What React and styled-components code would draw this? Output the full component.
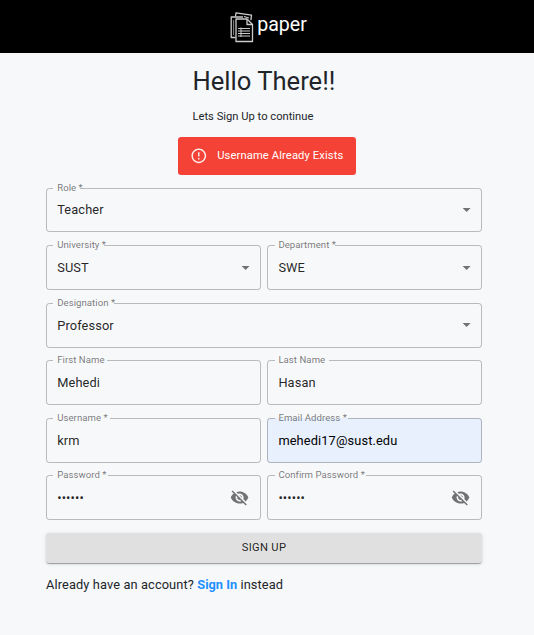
import React from "react";
import styled, { createGlobalStyle } from "styled-components";

const GlobalStyle = createGlobalStyle`
  * { box-sizing: border-box; }
  body {
    margin: 0;
    background: #f7f8fa;
    color: #212529;
    font-family: Roboto, "Liberation Sans", sans-serif;
  }
`;

const Page = styled.div`
  min-height: 635px;
  background: #f7f8fa;
`;

const Header = styled.header`
  height: 53px;
  background: #000;
  color: #fff;
  display: flex;
  justify-content: center;
  padding: 11px 0 0 3px;
  gap: 3px;
`;

const Brand = styled.span`
  font-size: 19.6px;
  line-height: 28px;
`;

const LogoSvg = styled.svg`
  width: 24px;
  height: 32px;
`;

const Main = styled.main`
  width: 436px;
  margin-left: 46px;
  display: flex;
  flex-direction: column;
`;

const Intro = styled.section`
  width: 142px;
  margin-left: 146.5px;
  padding-top: 12px;
  white-space: nowrap;
`;

const Title = styled.h1`
  margin: 0;
  font-size: 25.6px;
  font-weight: 400;
  line-height: 33.6px;
`;

const Subtitle = styled.p`
  margin: 10px 0 0;
  font-size: 11.2px;
  line-height: 16px;
`;

const Alert = styled.div`
  width: 178px;
  height: 38px;
  margin: 12px 0 0 132px;
  padding: 0 12px;
  border-radius: 3.2px;
  background: #f44336;
  color: #fff;
  display: flex;
  align-items: center;
  gap: 9.6px;
  font-size: 11.2px;
  letter-spacing: 0.01071em;
  white-space: nowrap;

  svg { width: 17.6px; height: 17.6px; fill: currentColor; opacity: 0.9; flex: none; }
`;

const Form = styled.form`
  margin-top: 12.94px;
  display: grid;
  grid-template-columns: 1fr 1fr;
  gap: 12.6px 6.4px;
`;

const Control = styled.div`
  position: relative;
  grid-column: ${(p) => (p.$wide ? "1 / -1" : "auto")};
  height: 44.95px;
  padding: 0 11.2px;
  border-radius: 3.2px;
  display: flex;
  align-items: center;
  justify-content: space-between;
  background: ${(p) => (p.$filled ? "#e8f0fe" : "transparent")};
  color: ${(p) => (p.$filled ? "#000" : "rgba(0, 0, 0, 0.87)")};
`;

const Outline = styled.fieldset`
  position: absolute;
  inset: -4px 0 0;
  margin: 0;
  padding: 0 6.4px;
  border: 1px solid rgba(0, 0, 0, 0.25);
  border-radius: 3.2px;
  pointer-events: none;

  legend {
    width: ${(p) => p.$notch}px;
    height: 9px;
    padding: 0;
  }
`;

const Label = styled.label`
  position: absolute;
  top: -5.75px;
  left: 11.2px;
  font-size: 9.6px;
  line-height: 12px;
  letter-spacing: 0.005em;
  color: rgba(0, 0, 0, 0.54);
  white-space: nowrap;
`;

const Value = styled.span`
  margin-bottom: 0.1px;
  font-size: 12.8px;
  line-height: 15px;
  letter-spacing: 0.00938em;
`;

const Adornment = styled.svg`
  width: 19.2px;
  height: 19.2px;
  fill: rgba(0, 0, 0, 0.54);
  margin-right: ${(p) => (p.$arrow ? "-5.6px" : "0.6px")};
`;

const Submit = styled.button`
  height: 29.6px;
  margin-top: 12.8px;
  border: 0;
  border-radius: 3.2px;
  background: #e0e0e0;
  color: rgba(0, 0, 0, 0.87);
  font: 400 11.2px/20px Roboto, "Liberation Sans", sans-serif;
  letter-spacing: 0.02857em;
  box-shadow: 0 2px 1px -1px rgba(0, 0, 0, 0.2), 0 1px 1px rgba(0, 0, 0, 0.14),
    0 1px 4px rgba(0, 0, 0, 0.12);
`;

const Footer = styled.p`
  margin: 12.8px 0 0;
  font-size: 12.8px;
  line-height: 19.2px;
  letter-spacing: 0.00938em;
`;

const SignInLink = styled.a`
  color: #1e90ff;
  font-weight: 700;
  letter-spacing: 0;
  text-decoration: none;
`;

const ICONS = {
  arrow: "M7 10l5 5 5-5z",
  hidden:
    "M12 7c2.76 0 5 2.24 5 5 0 .65-.13 1.26-.36 1.83l2.92 2.92c1.51-1.26 2.7-2.89 3.43-4.75-1.73-4.39-6-7.5-11-7.5-1.4 0-2.74.25-3.98.7l2.16 2.16C10.74 7.13 11.35 7 12 7zM2 4.27l2.28 2.28.46.46C3.08 8.3 1.78 10.02 1 12c1.73 4.39 6 7.5 11 7.5 1.55 0 3.03-.3 4.38-.84l.42.42L19.73 22 21 20.73 3.27 3 2 4.27zM7.53 9.8l1.55 1.55c-.05.21-.08.43-.08.65 0 1.66 1.34 3 3 3 .22 0 .44-.03.65-.08l1.55 1.55c-.67.33-1.41.53-2.2.53-2.76 0-5-2.24-5-5 0-.79.2-1.53.53-2.2zm4.31-.78l3.15 3.15.02-.16c0-1.66-1.34-3-3-3l-.17.01z",
};

const FIELDS = [
  { label: "Role *", value: "Teacher", icon: "arrow", notch: 27, wide: true },
  { label: "University *", value: "SUST", icon: "arrow", notch: 50.5 },
  { label: "Department *", value: "SWE", icon: "arrow", notch: 60 },
  { label: "Designation *", value: "Professor", icon: "arrow", notch: 61, wide: true },
  { label: "First Name", value: "Mehedi", notch: 54 },
  { label: "Last Name", value: "Hasan", notch: 54 },
  { label: "Username *", value: "krm", notch: 57 },
  { label: "Email Address *", value: "mehedi17@sust.edu", notch: 73, filled: true },
  { label: "Password *", value: "••••••", icon: "hidden", notch: 55 },
  { label: "Confirm Password *", value: "••••••", icon: "hidden", notch: 91 },
];

function Logo() {
  return (
    <LogoSvg viewBox="0 0 24 32" fill="none" stroke="#ccc" strokeWidth="1.3" strokeLinejoin="round">
      <path d="M5.5 5.5L6 1.8L21.5 4.2l-.6 5M14 5.5l5 1.5" />
      <path d="M5.5 26.5H1.2V6H13" />
      <path d="M3.6 9v15" stroke="#888" strokeWidth="1" />
      <path d="M6 30.5V8H17l5.5 5.5v17z" fill="#000" />
      <path d="M17 8v5.5h5.5" />
      <path d="M8 17.5H20M8 20H20M8 22.5H20M8 25H20M11 16.5v9.5" strokeWidth="1" />
    </LogoSvg>
  );
}

function Field({ label, value, icon, notch, wide, filled }) {
  return (
    <Control $wide={wide} $filled={filled}>
      <Label>{label}</Label>
      <Value>{value}</Value>
      {icon && (
        <Adornment viewBox="0 0 24 24" $arrow={icon === "arrow"}>
          <path d={ICONS[icon]} />
        </Adornment>
      )}
      <Outline $notch={notch}>
        <legend />
      </Outline>
    </Control>
  );
}

export default function App() {
  return (
    <Page>
      <GlobalStyle />
      <Header>
        <Logo />
        <Brand>paper</Brand>
      </Header>
      <Main>
        <Intro>
          <Title>Hello There!!</Title>
          <Subtitle>Lets Sign Up to continue</Subtitle>
        </Intro>
        <Alert>
          <svg viewBox="0 0 24 24">
            <path d="M11 15h2v2h-2zm0-8h2v6h-2zm.99-5C6.47 2 2 6.48 2 12s4.47 10 9.99 10C17.52 22 22 17.52 22 12S17.52 2 11.99 2zM12 20c-4.42 0-8-3.58-8-8s3.58-8 8-8 8 3.58 8 8-3.58 8-8 8z" />
          </svg>
          Username Already Exists
        </Alert>
        <Form>
          {FIELDS.map((field) => (
            <Field key={field.label} {...field} />
          ))}
        </Form>
        <Submit type="button">SIGN UP</Submit>
        <Footer>
          Already have an account? <SignInLink>Sign In</SignInLink> instead
        </Footer>
      </Main>
    </Page>
  );
}
